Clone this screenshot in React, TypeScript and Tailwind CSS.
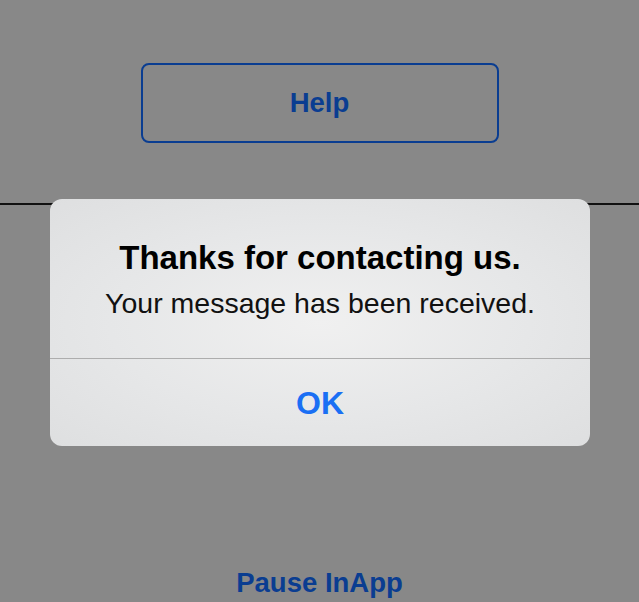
export default function App() {
  return (
    <div
      className="relative w-[639px] h-[602px] overflow-hidden bg-[#888888]"
      style={{ fontFamily: '"Liberation Sans", Arial, sans-serif' }}
    >
      <div className="flex flex-col items-center pt-[63px]">
        <div className="w-[358px] h-[80px] rounded-[8px] border-2 border-[#0a3d91] flex items-center justify-center">
          <span className="text-[27.5px] font-bold text-[#0a3d91]">Help</span>
        </div>
      </div>
      <div className="mt-[60px] h-[2px] w-full bg-[#111111]" />
      <div className="mt-[358px] flex justify-center">
        <span className="text-[27.5px] font-bold text-[#0a3d91] leading-[40px]">Pause InApp</span>
      </div>

      <div className="absolute left-[50px] top-[199px] w-[540px] h-[247px] rounded-[12px] overflow-hidden flex flex-col bg-[radial-gradient(ellipse_at_center,#f0f0f0_0%,#e6e7e8_55%,#dedfe0_100%)]">
        <div className="h-[159px] flex flex-col items-center pt-[37px]">
          <div className="text-[33px] font-bold text-black leading-[44px]">Thanks for contacting us.</div>
          <div className="text-[28.5px] text-[#111] leading-[44px] mt-[1px]">Your message has been received.</div>
        </div>
        <div className="h-[1px] bg-[#adadad]" />
        <div className="flex-1 flex items-center justify-center">
          <span className="text-[32px] font-bold text-[#1a6ff4]">OK</span>
        </div>
      </div>
    </div>
  );
}
